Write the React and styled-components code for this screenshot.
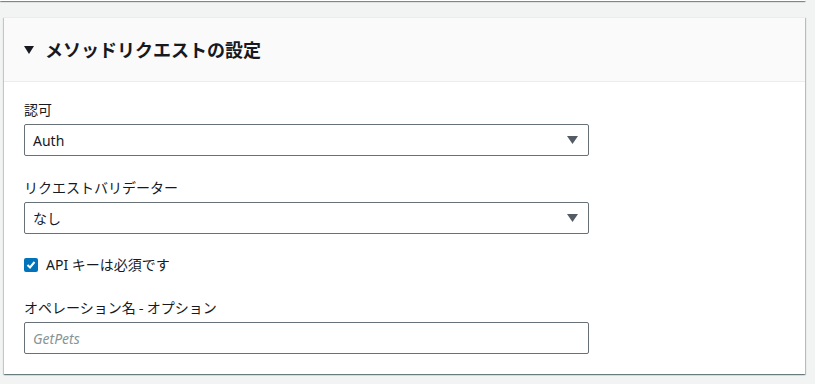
import React from "react";
import styled, { createGlobalStyle } from "styled-components";

const Global = createGlobalStyle`
  html, body { margin: 0; padding: 0; background: #f2f3f3; }
  body {
    font-family: "Noto Sans", "Noto Sans CJK JP", sans-serif;
    color: #16191f;
    -webkit-font-smoothing: antialiased;
  }
`;

const Page = styled.div`
  width: 815px;
  height: 384px;
  overflow: hidden;
  padding: 0 10px 0 4px;
  box-sizing: border-box;
`;

const PrevCard = styled.div`
  height: 1px;
  margin-left: -4px;
  width: 805px;
  background: #ffffff;
  box-shadow: 0 1px 1px 0 rgba(0, 28, 36, 0.5), 1px 1px 1px 0 rgba(0, 28, 36, 0.2);
`;

const Card = styled.section`
  margin-top: 16px;
  width: 801px;
  background: #ffffff;
  border-top: 1px solid #eaeded;
  box-shadow: 0 1px 1px 0 rgba(0, 28, 36, 0.35), 1px 1px 1px 0 rgba(0, 28, 36, 0.2),
    -1px 1px 1px 0 rgba(0, 28, 36, 0.15);
`;

const Header = styled.div`
  height: 63px;
  background: #fafafa;
  border-bottom: 1px solid #eaeded;
  display: flex;
  align-items: center;
  padding: 0 20px;
  gap: 11px;
`;

const Caret = styled.svg`
  width: 10px;
  height: 8px;
  flex: none;
`;

const Title = styled.h2`
  margin: 0;
  font-family: "Noto Sans CJK JP", "Noto Sans", sans-serif;
  font-size: 18px;
  font-weight: 700;
  line-height: 24px;
  color: #16191f;
  position: relative;
  top: -1px;
`;

const Body = styled.div`
  padding: 16px 20px 20px;
  display: flex;
  flex-direction: column;
  gap: 20px;
`;

const Field = styled.div`
  display: flex;
  flex-direction: column;
  gap: 4px;
`;

const Label = styled.label`
  font-family: "Noto Sans CJK JP", "Noto Sans", sans-serif;
  font-size: 14px;
  line-height: 22px;
  color: #16191f;
`;

const Control = styled.div`
  width: 565px;
  height: 32px;
  box-sizing: border-box;
  border: 1px solid #687078;
  border-radius: 2px;
  background: #ffffff;
  display: flex;
  align-items: center;
  justify-content: space-between;
  padding: 0 10px 0 8px;
  font-family: "Noto Sans", "Noto Sans CJK JP", sans-serif;
  font-size: 14px;
  font-style: ${(p) => (p.$placeholder ? "italic" : "normal")};
  color: ${(p) => (p.$placeholder ? "#879596" : "#16191f")};
`;

const Arrow = styled.svg`
  width: 11px;
  height: 8px;
  flex: none;
`;

const CheckRow = styled.div`
  display: flex;
  align-items: center;
  gap: 8px;
  height: 22px;
`;

const Box = styled.span`
  width: 14px;
  height: 14px;
  border-radius: 2px;
  background: #0073bb;
  display: inline-flex;
  align-items: center;
  justify-content: center;
  flex: none;
`;

const CheckText = styled.span`
  font-family: "Noto Sans", "Noto Sans CJK JP", sans-serif;
  font-size: 14px;
  line-height: 22px;
`;

const Select = ({ value }) => (
  <Control>
    <span>{value}</span>
    <Arrow viewBox="0 0 11 8">
      <polygon points="0,0 11,0 5.5,8" fill="#545b64" />
    </Arrow>
  </Control>
);

export default function App() {
  return (
    <>
      <Global />
      <Page>
        <PrevCard />
        <Card>
          <Header>
            <Caret viewBox="0 0 10 8">
              <polygon points="0,0 10,0 5,8" fill="#16191f" />
            </Caret>
            <Title>メソッドリクエストの設定</Title>
          </Header>
          <Body>
            <Field>
              <Label>認可</Label>
              <Select value="Auth" />
            </Field>
            <Field>
              <Label>リクエストバリデーター</Label>
              <Select value="なし" />
            </Field>
            <CheckRow>
              <Box>
                <svg width="10" height="10" viewBox="0 0 10 10">
                  <polyline points="1.5,5 4,7.5 8.5,2" fill="none" stroke="#fff" strokeWidth="2" />
                </svg>
              </Box>
              <CheckText>API キーは必須です</CheckText>
            </CheckRow>
            <Field>
              <Label>オペレーション名 - オプション</Label>
              <Control $placeholder>GetPets</Control>
            </Field>
          </Body>
        </Card>
      </Page>
    </>
  );
}
